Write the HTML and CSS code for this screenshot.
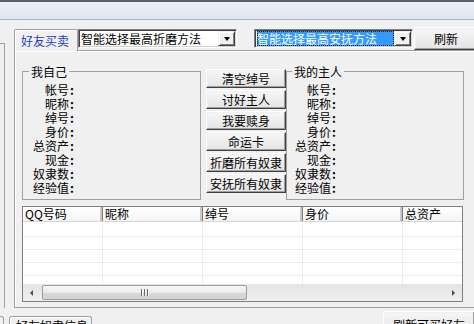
FILE: index.html
```html
<!DOCTYPE html>
<html lang="zh-CN">
<head>
<meta charset="utf-8">
<link rel="stylesheet" href="styles.css">
</head>
<body>
<div class="titlebar"></div>
<div class="content">
  <div class="stub"></div>
  <div class="tabctl">
    <div class="tabrow">
      <div class="tab">好友买卖</div>
      <div class="combo"><span class="combo-text">智能选择最高折磨方法</span><span class="drop"><i></i></span></div>
      <div class="combo combo2"><span class="combo-text sel">智能选择最高安抚方法</span><span class="drop"><i></i></span></div>
      <button class="btn btn-refresh">刷新</button>
    </div>
    <div class="panel">
      <div class="upper">
        <fieldset class="group g-self">
          <legend>我自己</legend>
          <div class="labels l-self">
            <div>帐号<span class="c">:</span></div>
            <div>昵称<span class="c">:</span></div>
            <div>绰号<span class="c">:</span></div>
            <div>身价<span class="c">:</span></div>
            <div>总资产<span class="c">:</span></div>
            <div>现金<span class="c">:</span></div>
            <div>奴隶数<span class="c">:</span></div>
            <div>经验值<span class="c">:</span></div>
          </div>
        </fieldset>
        <div class="actions">
          <button class="btn act">清空绰号</button>
          <button class="btn act">讨好主人</button>
          <button class="btn act">我要赎身</button>
          <button class="btn act">命运卡</button>
          <button class="btn act">折磨所有奴隶</button>
          <button class="btn act">安抚所有奴隶</button>
        </div>
        <fieldset class="group g-master">
          <legend>我的主人</legend>
          <div class="labels l-master">
            <div>帐号<span class="c">:</span></div>
            <div>昵称<span class="c">:</span></div>
            <div>绰号<span class="c">:</span></div>
            <div>身价<span class="c">:</span></div>
            <div>总资产<span class="c">:</span></div>
            <div>现金<span class="c">:</span></div>
            <div>奴隶数<span class="c">:</span></div>
            <div>经验值<span class="c">:</span></div>
          </div>
        </fieldset>
      </div>
      <div class="listview">
        <div class="lv-head">
          <div class="hcell w1">QQ号码</div>
          <div class="hcell w2">昵称</div>
          <div class="hcell w2">绰号</div>
          <div class="hcell w2">身价</div>
          <div class="hcell last">总资产</div>
        </div>
        <div class="lv-body">
          <div class="row"><div class="cell w1"></div><div class="cell w2"></div><div class="cell w2"></div><div class="cell w2"></div><div class="cell last"></div></div>
          <div class="row"><div class="cell w1"></div><div class="cell w2"></div><div class="cell w2"></div><div class="cell w2"></div><div class="cell last"></div></div>
          <div class="row"><div class="cell w1"></div><div class="cell w2"></div><div class="cell w2"></div><div class="cell w2"></div><div class="cell last"></div></div>
          <div class="row"><div class="cell w1"></div><div class="cell w2"></div><div class="cell w2"></div><div class="cell w2"></div><div class="cell last"></div></div>
          <div class="row"><div class="cell w1"></div><div class="cell w2"></div><div class="cell w2"></div><div class="cell w2"></div><div class="cell last"></div></div>
        </div>
        <div class="hscroll">
          <div class="sb-arrow"><i class="tri-left"></i></div>
          <div class="sb-thumb"><span class="grip"></span><span class="grip"></span><span class="grip"></span></div>
          <div class="sb-track"></div>
          <div class="sb-arrow"><i class="tri-right"></i></div>
        </div>
      </div>
    </div>
  </div>
</div>
<div class="footer">
  <div class="ftab-part"></div>
  <div class="ftab">好友奴隶信息</div>
  <button class="btn btn-more">刷新可买好友</button>
</div>
</body>
</html>
```

FILE: styles.css
```css
* { box-sizing: border-box; }
html, body { margin: 0; padding: 0; }
body {
  width: 474px;
  height: 324px;
  overflow: hidden;
  background: #f0f0f0;
  font: 12px/14px "Noto Sans CJK SC", "Noto Sans", sans-serif;
  color: #000;
}

.titlebar {
  height: 20px;
  background: linear-gradient(#5b626c 0, #5b626c 2px, #eef1f8 2px, #dfe4ee 19px);
  border-bottom: 1px solid #aab3c3;
}

.content { display: flex; align-items: flex-start; }

.stub {
  flex: none;
  width: 5px;
  height: 265px;
  margin-top: 23px;
  border-top: 1px solid #a0a0a0;
  border-right: 1px solid #a0a0a0;
}

.tabctl { flex: none; width: 470px; margin-left: 9px; }

.tabrow {
  display: flex;
  align-items: flex-start;
  height: 23px;
  margin-top: 7px;
}

.tab {
  position: relative;
  z-index: 1;
  flex: none;
  width: 64px;
  height: 22px;
  margin-top: 2px;
  padding-left: 6px;
  border: 1px solid #a0a0a0;
  border-bottom: 0;
  border-radius: 2px 2px 0 0;
  box-shadow: inset 1px 1px #fff;
  background: #f0f0f0;
  color: #1f3fbf;
  line-height: 21px;
}

.combo {
  flex: none;
  display: flex;
  width: 159px;
  height: 19px;
  margin-top: 2px;
  padding: 1px;
  background: #fff;
  border: 1px solid;
  border-color: #808080 #fff #fff #808080;
  box-shadow: inset 1px 1px #404040, inset -1px -1px #d4d0c8;
}
.combo2 { margin-left: 17px; }

.combo-text {
  flex: 1;
  height: 15px;
  padding-left: 1px;
  line-height: 15px;
  white-space: nowrap;
  overflow: hidden;
}
.combo-text.sel {
  flex: none;
  width: 137px;
  margin-left: 1px;
  padding-left: 0;
  background: #3399ff;
  color: #fff;
  outline: 1px dotted #222;
  outline-offset: -1px;
}

.drop {
  flex: none;
  margin-left: auto;
  width: 17px;
  height: 15px;
  display: flex;
  align-items: center;
  justify-content: center;
  background: #f0f0f0;
  border: 1px solid;
  border-color: #f0f0f0 #404040 #404040 #f0f0f0;
  box-shadow: inset 1px 1px #fff, inset -1px -1px #808080;
}
.drop i {
  display: block;
  width: 1px;
  height: 0;
  border-left: 3px solid transparent;
  border-right: 3px solid transparent;
  border-top: 4px solid #000;
}

.btn {
  font: inherit;
  color: #000;
  padding: 0;
  background: linear-gradient(#f7f7f7, #e4e4e4);
  border: 1px solid;
  border-color: #fff #404040 #404040 #fff;
  box-shadow: inset -1px -1px #a0a0a0, inset 1px 1px #f0f0f0;
  white-space: nowrap;
}

.btn-refresh {
  flex: none;
  position: relative;
  z-index: 1;
  width: 64px;
  height: 23px;
  margin-left: 1px;
  line-height: 20px;
}

.panel {
  height: 258px;
  padding: 13px 0 0 7px;
  border-top: 1px solid #a0a0a0;
  border-left: 1px solid #a0a0a0;
  border-bottom: 1px solid #a0a0a0;
  box-shadow: inset 1px 1px #fff;
}

.upper { display: flex; align-items: flex-start; }

.group {
  flex: none;
  margin: 0;
  min-width: 0;
  border: 1px solid #a0a0a0;
  padding: 4px 0 4px 6px;
}
.group legend {
  padding: 0 2px;
  line-height: 15px;
}
.g-self { width: 179px; }
.g-master { width: 178px; padding-left: 5px; }

.labels { text-align: right; }
.labels div { height: 14px; line-height: 14px; white-space: nowrap; }
.l-self { width: 46px; }
.l-master { width: 45px; }
.c { display: inline-block; width: 6px; text-align: center; font-weight: bold; }

.actions {
  flex: none;
  display: flex;
  flex-direction: column;
  gap: 2px;
  width: 80px;
  margin: 5px 0 0 5px;
}
.act { height: 19px; line-height: 16px; }

.listview {
  width: 441px;
  height: 96px;
  margin-top: 6px;
  border: 1px solid #7f7f7f;
  background: #fff;
  display: flex;
  flex-direction: column;
}

.lv-head {
  flex: none;
  display: flex;
  height: 15px;
  border-bottom: 1px solid #d5d5d5;
  background: linear-gradient(#fff, #f4f4f4);
}
.hcell {
  flex: none;
  height: 14px;
  padding-left: 2px;
  line-height: 14px;
  border-right: 1px solid #7a7a7a;
  box-shadow: inset -2px 0 #c8c8c8;
  white-space: nowrap;
}
.w1 { width: 80px; }
.w2 { width: 100px; }
.last { flex: 1; border-right: 0; box-shadow: none; }

.lv-body { flex: 1; overflow: hidden; }
.row { display: flex; height: 13px; border-bottom: 1px solid #ececec; }
.row:first-child { height: 15px; }
.cell { flex: none; border-right: 1px solid #ececec; }
.cell.last { flex: 1; border-right: 0; }

.hscroll {
  flex: none;
  display: flex;
  height: 17px;
  background: linear-gradient(#e3e3e3, #f0f0f0);
}
.sb-arrow {
  flex: none;
  width: 17px;
  display: flex;
  align-items: center;
  justify-content: center;
}
.tri-left, .tri-right {
  display: block;
  width: 0;
  height: 0;
  border-top: 3px solid transparent;
  border-bottom: 3px solid transparent;
}
.tri-left { border-right: 3px solid #4a4a4a; }
.tri-right { border-left: 3px solid #4a4a4a; }

.sb-thumb {
  flex: none;
  width: 205px;
  margin: 1px 0 1px 2px;
  border: 1px solid #9c9c9c;
  border-radius: 2px;
  background: linear-gradient(#f6f6f6, #ebebeb 50%, #d9d9d9 51%, #d3d3d3);
  display: flex;
  align-items: center;
  justify-content: center;
  gap: 2px;
}
.grip { display: block; width: 1px; height: 7px; background: #6a6a6a; box-shadow: 1px 0 #fafafa; }
.sb-track { flex: 1; }

.footer {
  display: flex;
  align-items: flex-start;
  height: 16px;
}
.ftab-part {
  flex: none;
  width: 4px;
  height: 10px;
  margin-top: 8px;
  border-top: 1px solid #a0a0a0;
  border-right: 1px solid #a0a0a0;
  border-radius: 0 3px 0 0;
}
.ftab {
  flex: none;
  width: 83px;
  height: 12px;
  margin: 8px 0 0 5px;
  padding: 2px 0 0 6px;
  border: 1px solid #a0a0a0;
  border-bottom: 0;
  border-radius: 3px 3px 0 0;
  box-shadow: inset 1px 1px #fff;
  white-space: nowrap;
  overflow: hidden;
  line-height: 14px;
}
.btn-more {
  flex: none;
  width: 92px;
  height: 23px;
  margin: 3px -1px 0 auto;
  padding-top: 5px;
  line-height: 14px;
  display: block;
  text-align: center;
}
```
